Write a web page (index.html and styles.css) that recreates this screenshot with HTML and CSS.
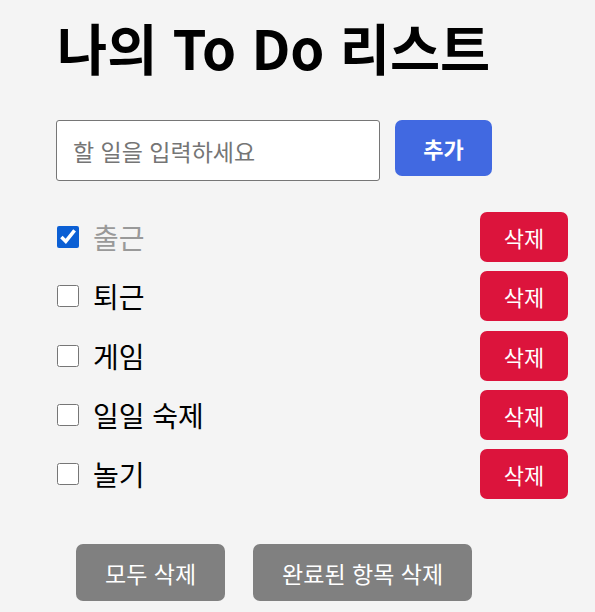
FILE: index.html
```html
<!DOCTYPE html>
<html lang="ko">
<head>
<meta charset="utf-8">
<link rel="stylesheet" href="styles.css">
</head>
<body>
<div class="app">
  <h1 class="title">나의 To Do 리스트</h1>
  <div class="add-row">
    <input class="add-input" type="text" placeholder="할 일을 입력하세요">
    <button class="add-btn">추가</button>
  </div>
  <ul class="list">
    <li class="item done"><label class="item-label"><input type="checkbox" class="check" checked><span class="text">출근</span></label><button class="del-btn">삭제</button></li>
    <li class="item"><label class="item-label"><input type="checkbox" class="check"><span class="text">퇴근</span></label><button class="del-btn">삭제</button></li>
    <li class="item"><label class="item-label"><input type="checkbox" class="check"><span class="text">게임</span></label><button class="del-btn">삭제</button></li>
    <li class="item"><label class="item-label"><input type="checkbox" class="check"><span class="text">일일 숙제</span></label><button class="del-btn">삭제</button></li>
    <li class="item"><label class="item-label"><input type="checkbox" class="check"><span class="text">놀기</span></label><button class="del-btn">삭제</button></li>
  </ul>
  <div class="footer">
    <button class="foot-btn">모두 삭제</button>
    <button class="foot-btn">완료된 항목 삭제</button>
  </div>
</div>
</body>
</html>
```

FILE: styles.css
```css
html, body {
  margin: 0;
  padding: 0;
  background: #f4f4f4;
}
body {
  font-family: "Noto Sans CJK KR", "Noto Sans", sans-serif;
  color: #000;
}
.app {
  width: 511px;
  padding-left: 57px;
}
.title {
  margin: 10px 0 0;
  font-size: 54.5px;
  font-weight: 700;
  line-height: 74px;
}
.add-row {
  display: flex;
  align-items: flex-start;
  gap: 15px;
  margin-top: 36px;
}
.add-input {
  box-sizing: border-box;
  width: 324px;
  height: 61px;
  margin: 0 0 0 -1px;
  padding: 0 16px;
  border: 1px solid #767676;
  border-radius: 3px;
  background: #fff;
  font-family: inherit;
  font-size: 23px;
  color: #000;
}
.add-input::placeholder {
  color: #757575;
}
.add-btn {
  width: 97px;
  height: 56px;
  border: none;
  border-radius: 7px;
  background: #4169e1;
  color: #fff;
  font-family: inherit;
  font-size: 22px;
  font-weight: 700;
}
.list {
  list-style: none;
  margin: 31px 0 0;
  padding: 0;
}
.item {
  display: flex;
  align-items: center;
  justify-content: space-between;
  height: 50px;
  margin-bottom: 9.25px;
}
.item-label {
  display: flex;
  align-items: center;
  gap: 14px;
}
.check {
  width: 22px;
  height: 22px;
  margin: 0;
  accent-color: #0b5fd4;
}
.text {
  font-size: 28px;
}
.done .text {
  color: #999;
}
.del-btn {
  width: 88px;
  height: 50px;
  border: none;
  border-radius: 7px;
  background: #dc143c;
  color: #fff;
  font-family: inherit;
  font-size: 22px;
}
.footer {
  display: flex;
  gap: 28px;
  margin-top: 45px;
  padding-left: 19px;
}
.foot-btn {
  height: 57px;
  padding: 0 29px;
  border: none;
  border-radius: 7px;
  background: #808080;
  color: #fff;
  font-family: inherit;
  font-size: 23px;
}
```
